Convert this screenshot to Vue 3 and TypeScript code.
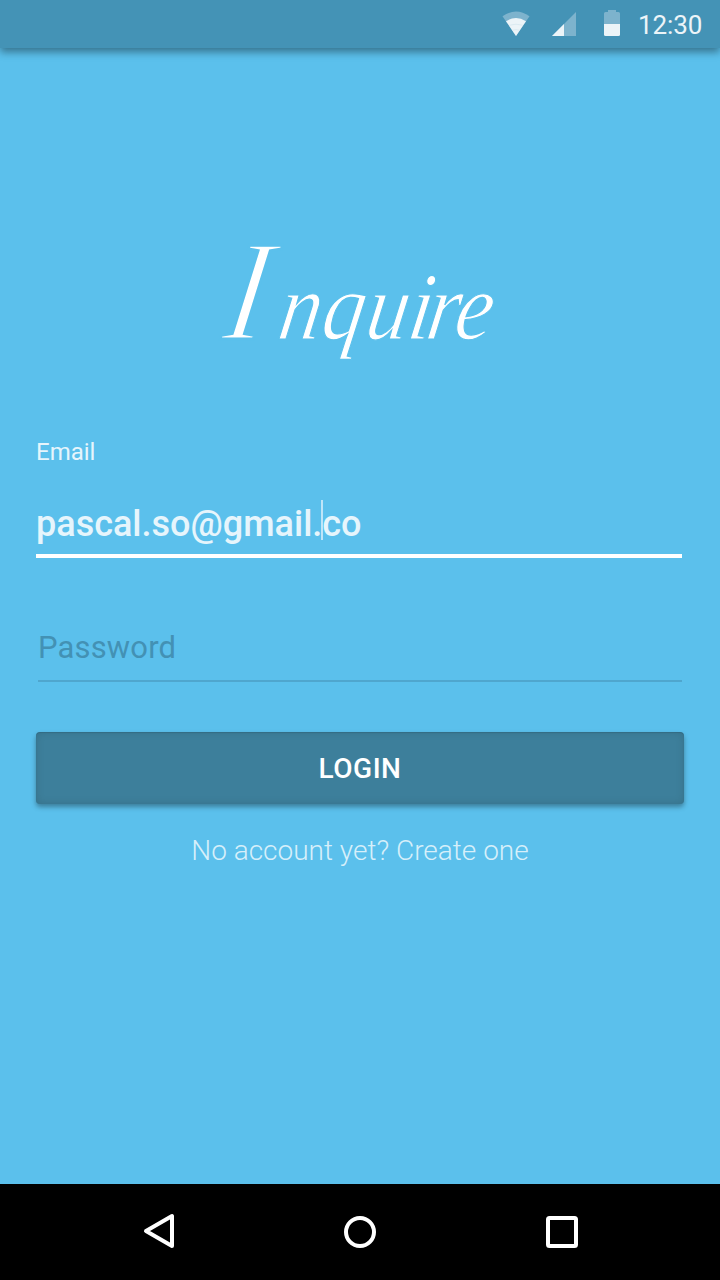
<script setup lang="ts">
import { ref } from 'vue'

const time = ref('12:30')
const emailStart = ref('pascal.so@gmail.')
const emailEnd = ref('co')
</script>

<template>
  <div class="screen">
    <header class="status">
      <svg class="wifi" width="28" height="26" viewBox="0 0 28 26">
        <path d="M0.5 5.3 Q14 -4.3 27.5 5.3 L14 25Z" fill="#7db3cd" />
        <path d="M4 10.2 Q14 3.8 24 10.2 L14 25Z" fill="#ecf4f8" />
        <path d="M7.5 14.2Q14 12.2 20.5 14.2M10 19.3Q14 18 18 19.3" fill="none" stroke="#d5e7ef" stroke-width=".8" />
      </svg>
      <svg class="signal" width="24" height="24" viewBox="0 0 24 24">
        <path d="M24 0V24H0Z" fill="#7db3cd" />
        <path d="M12 12V24H0Z" fill="#ecf4f8" />
      </svg>
      <svg class="battery" width="16" height="26" viewBox="0 0 16 26">
        <path d="M4 0H12V2H14.5Q16 2 16 3.5V14H0V3.5Q0 2 1.5 2H4Z" fill="#7db3cd" />
        <path d="M0 14H16V24.5Q16 26 14.5 26H1.5Q0 26 0 24.5Z" fill="#ecf4f8" />
      </svg>
      <span class="time">{{ time }}</span>
    </header>

    <main class="content">
      <h1 class="brand">
        <svg width="720" height="220" viewBox="0 180 720 220">
          <text class="brand-text" transform="translate(218 339) skewX(-9) scale(.88 1)"><tspan class="initial" x="3" y="0">I</tspan><tspan class="rest" x="66 115 165 213 234 266" y="0">nquire</tspan></text>
        </svg>
      </h1>

      <form class="form" @submit.prevent>
        <label class="label">Email</label>
        <div class="email"><span>{{ emailStart }}</span><i class="caret"></i><span>{{ emailEnd }}</span></div>
        <div class="password">Password</div>
        <button class="login" type="submit">LOGIN</button>
        <a class="create">No account yet? Create one</a>
      </form>
    </main>

    <nav class="navbar">
      <svg width="720" height="96" viewBox="0 0 720 96" fill="none" stroke="#fff" stroke-width="4" stroke-linejoin="round">
        <path d="M172 32V62L146 47Z" />
        <circle cx="360" cy="48" r="14" />
        <rect x="548" y="34" width="28" height="28" rx="1.5" />
      </svg>
    </nav>
  </div>
</template>

<style>
body {
  margin: 0;
  background: #5bc0ec;
}
</style>

<style scoped>
.screen {
  width: 720px;
  height: 1280px;
  display: flex;
  flex-direction: column;
  overflow: hidden;
  background: #5bc0ec;
  font-family: Roboto, "Liberation Sans", sans-serif;
}
.status {
  position: relative;
  height: 48px;
  flex: none;
  display: flex;
  align-items: flex-start;
  box-sizing: border-box;
  padding-left: 502px;
  background: #4493b6;
  box-shadow: 0 4px 8px rgba(0, 0, 0, 0.4);
}
.wifi {
  margin-top: 11px;
}
.signal {
  margin: 12px 0 0 22px;
}
.battery {
  margin: 10px 0 0 28px;
}
.time {
  margin: 10px 0 0 18px;
  font-size: 26px;
  line-height: 30px;
  letter-spacing: -0.1px;
  color: #ecf4f8;
}
.content {
  flex: 1;
}
.brand {
  margin: 132px 0 0;
  height: 220px;
}
.brand svg {
  display: block;
}
.brand-text {
  fill: #fff;
  stroke: #5bc0ec;
  stroke-width: 1.2px;
  font-family: "Liberation Serif", serif;
  font-style: italic;
  font-weight: 400;
}
.initial {
  font-size: 143px;
  stroke-width: 3px;
}
.rest {
  font-size: 96px;
}
.form {
  display: flex;
  flex-direction: column;
  margin: 38px 36px 0;
}
.label {
  height: 62px;
  font-size: 24px;
  line-height: 28px;
  color: #e6f5fc;
}
.email {
  height: 54px;
  width: 646px;
  display: flex;
  border-bottom: 4px solid #fff;
  font-size: 36px;
  font-weight: 500;
  line-height: 48px;
  color: #e6f5fc;
}
.caret {
  width: 2px;
  height: 40px;
  margin: 0 -1px;
  background: #bee5f8;
}
.password {
  width: 644px;
  height: 52px;
  margin: 70px 0 0 2px;
  border-bottom: 2px solid #4fa6ce;
  font-size: 31px;
  letter-spacing: 0.15px;
  line-height: 40px;
  color: #4391b4;
}
.login {
  height: 72px;
  margin-top: 50px;
  padding: 0;
  border: 0;
  border-radius: 4px;
  background: #3d7f9b;
  box-shadow: 0 3px 5px rgba(0, 0, 0, 0.34), inset 0 0 8px rgba(0, 0, 0, 0.12), inset 0 1px 1px rgba(0, 0, 0, 0.1);
  font-family: inherit;
  font-size: 28px;
  font-weight: 500;
  letter-spacing: 0.5px;
  line-height: 74px;
  color: #fff;
}
.create {
  margin-top: 30px;
  font-size: 28px;
  font-weight: 300;
  line-height: 33px;
  text-align: center;
  color: #d6effa;
}
.navbar {
  height: 96px;
  flex: none;
  background: #000;
}
.navbar svg {
  display: block;
}
</style>
